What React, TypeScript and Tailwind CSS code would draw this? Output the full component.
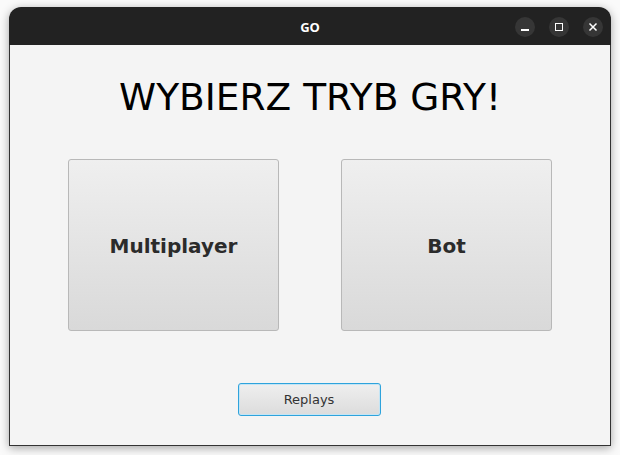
import React from "react";

export default function App() {
  const font = { fontFamily: '"DejaVu Sans", Verdana, sans-serif' };
  return (
    <div className="w-[620px] h-[455px] bg-[#fafafa] pt-[7px] pl-[9px]" style={font}>
      <div className="w-[602px] h-[439px] flex flex-col rounded-t-[12px] shadow-[0_2px_10px_rgba(0,0,0,0.35)]">
        <div className="h-[38px] bg-[#222222] rounded-t-[12px] flex items-center relative shrink-0">
          <div className="flex-1 text-center text-white font-bold text-[13px] pt-[3px]" style={{ fontFamily: '"Noto Sans", "DejaVu Sans", sans-serif' }}>GO</div>
          <div className="absolute right-[8px] top-[10px] flex gap-[14px]">
            <div className="w-[20px] h-[20px] rounded-full bg-[#363636] flex items-center justify-center">
              <div className="w-[8px] h-[1.5px] bg-white mt-[6px]" />
            </div>
            <div className="w-[20px] h-[20px] rounded-full bg-[#363636] flex items-center justify-center">
              <div className="w-[8px] h-[8px] border-[1.5px] border-white" />
            </div>
            <div className="w-[20px] h-[20px] rounded-full bg-[#363636] flex items-center justify-center">
              <svg width="10" height="10" viewBox="0 0 10 10">
                <path d="M1.5 1.5 L8.5 8.5 M8.5 1.5 L1.5 8.5" stroke="white" strokeWidth="1.5" />
              </svg>
            </div>
          </div>
        </div>
        <div className="flex-1 bg-[#f4f4f4] border-x border-b border-[#333] flex flex-col items-center">
          <div className="mt-[30px] text-[37.5px] leading-[44px] text-black">WYBIERZ TRYB GRY!</div>
          <div className="mt-[40px] flex gap-[62px]">
            <button className="w-[211px] h-[172px] rounded-[3px] border border-[#b8b8b8] bg-gradient-to-b from-[#efefef] to-[#d9d9d9] text-[20px] font-bold text-[#2b2b2b] pt-[2px]">
              Multiplayer
            </button>
            <button className="w-[211px] h-[172px] rounded-[3px] border border-[#b8b8b8] bg-gradient-to-b from-[#efefef] to-[#d9d9d9] text-[20px] font-bold text-[#2b2b2b] pt-[2px]">
              Bot
            </button>
          </div>
          <button className="mt-[52px] mr-[2px] w-[143px] h-[33px] rounded-[3px] border border-[#2ea3dc] shadow-[inset_0_0_0_1px_#c4e5f5] bg-gradient-to-b from-[#efefef] to-[#dcdcdc] text-[13px] text-[#333]">
            Replays
          </button>
        </div>
      </div>
    </div>
  );
}
